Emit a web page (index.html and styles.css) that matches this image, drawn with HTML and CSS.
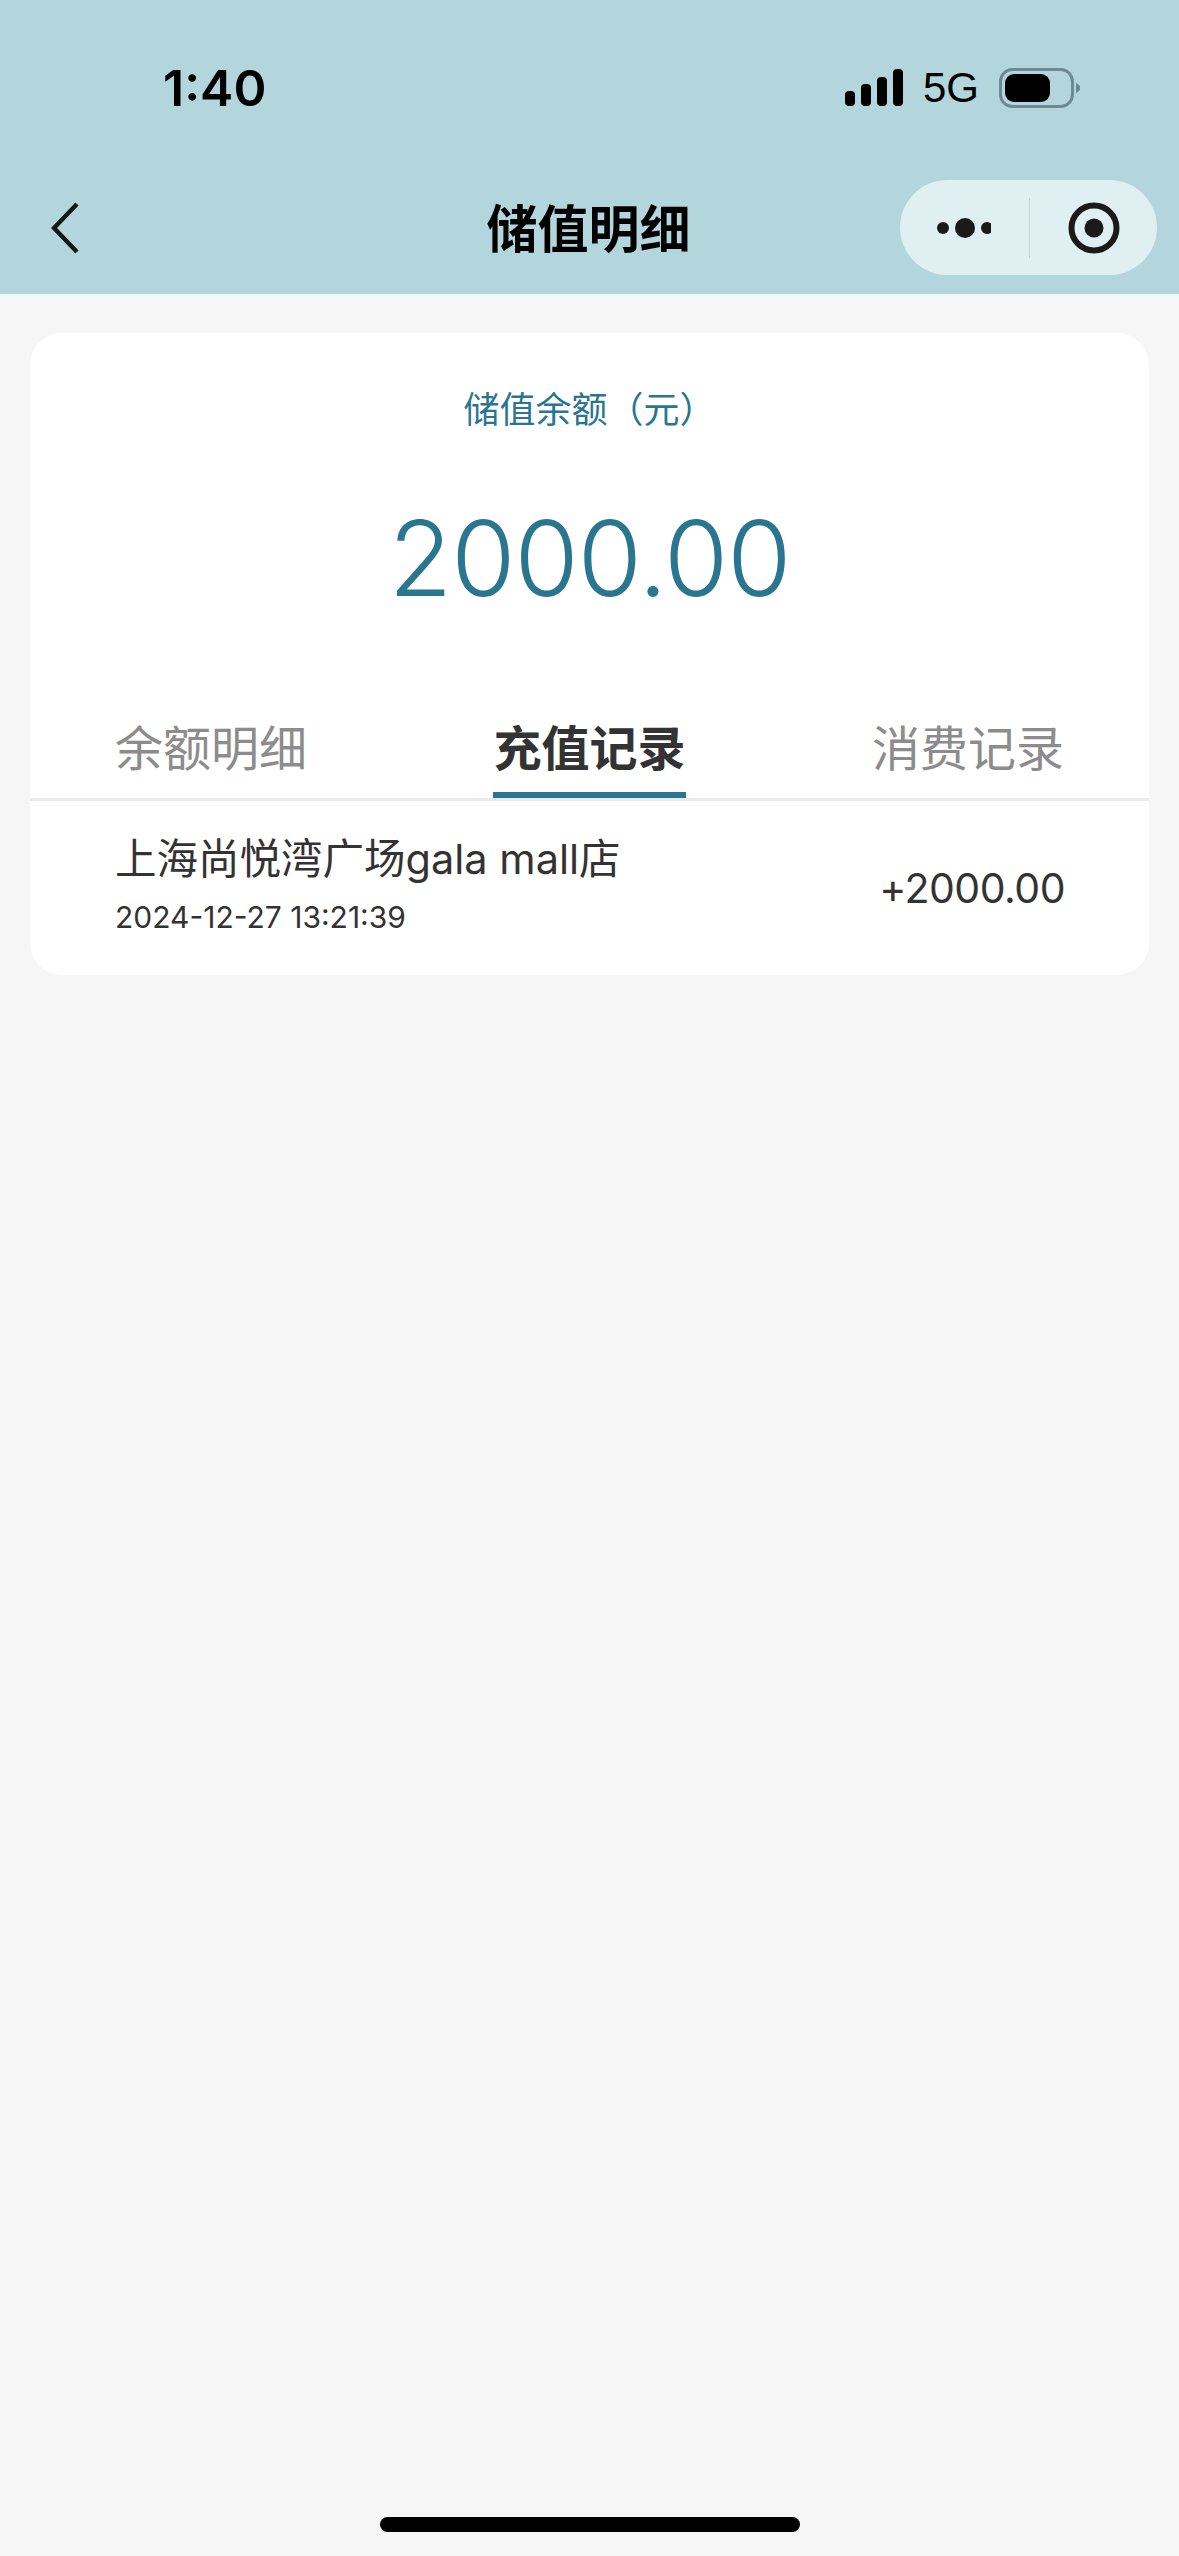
FILE: index.html
```html
<!DOCTYPE html>
<html lang="zh-CN">
<head>
<meta charset="utf-8">
<title>储值明细</title>
<link rel="stylesheet" href="styles.css">
</head>
<body>
<div class="page">
  <header class="header">
    <div class="status">
      <span class="time">1:40</span>
      <div class="status-right">
        <svg class="signal" width="58" height="37" viewBox="0 0 58 37"><rect x="0" y="22" width="10" height="15" rx="4"/><rect x="16" y="15" width="10" height="22" rx="4"/><rect x="32" y="8" width="10" height="29" rx="4"/><rect x="48" y="0" width="10" height="37" rx="4"/></svg>
        <span class="net">5G</span>
        <svg class="battery" width="82" height="40" viewBox="0 0 82 40"><rect x="1.5" y="1.5" width="72" height="37" rx="12" fill="none" stroke="#6d8a92" stroke-width="3"/><rect x="6" y="6" width="45" height="28" rx="9" fill="#000"/><path d="M77 14.5l4 3.5v4l-4 3.5z" fill="#6d8a92"/></svg>
      </div>
    </div>
    <nav class="nav">
      <svg class="back" width="28" height="52" viewBox="0 0 28 52"><path d="M26 2L3 26l23 24" fill="none" stroke="#14181a" stroke-width="4.5"/></svg>
      <h1 class="title">储值明细</h1>
      <div class="capsule">
        <svg class="more" width="54" height="22" viewBox="0 0 54 22"><circle cx="6" cy="11" r="6"/><circle cx="28" cy="11" r="10"/><circle cx="50" cy="11" r="6"/></svg>
        <span class="capsule-line"></span>
        <svg class="target" width="52" height="52" viewBox="0 0 52 52"><circle cx="26" cy="26" r="22.5" fill="none" stroke="#1a1a1a" stroke-width="6"/><circle cx="26" cy="26" r="9.5" fill="#1a1a1a"/></svg>
      </div>
    </nav>
  </header>

  <main class="card">
    <div class="balance">
      <div class="balance-label">储值余额（元）</div>
      <div class="balance-num">2000.00</div>
    </div>
    <div class="tabs">
      <span class="tab">余额明细</span>
      <span class="tab tab-active">充值记录</span>
      <span class="tab">消费记录</span>
    </div>
    <div class="record">
      <div class="record-info">
        <div class="record-name">上海尚悦湾广场gala mall店</div>
        <div class="record-time">2024-12-27 13:21:39</div>
      </div>
      <div class="record-amount">+2000.00</div>
    </div>
  </main>

  <div class="home-bar"></div>
</div>
</body>
</html>
```

FILE: styles.css
```css
* { box-sizing: border-box; margin: 0; padding: 0; }
html, body { width: 1179px; height: 2556px; overflow: hidden; }
body {
  background: #f6f6f6;
  font-family: Inter, "Noto Sans CJK SC", sans-serif;
}
.page { width: 1179px; height: 2556px; display: flex; flex-direction: column; }

.header { height: 294px; background: #b3d6dc; flex: none; }
.status {
  height: 176px;
  padding: 62px 98px 0 163px;
  display: flex;
  justify-content: space-between;
  align-items: flex-start;
}
.time { font-size: 50px; line-height: 52px; font-weight: 600; color: #000; }
.status-right { display: flex; align-items: flex-start; }
.signal { margin-top: 7px; }
.net { margin-left: 20px; margin-top: 2px; font-size: 42px; line-height: 48px; font-family: "Liberation Sans", sans-serif; color: #000; }
.battery { margin-left: 20px; margin-top: 6px; }

.nav { height: 118px; position: relative; display: flex; align-items: flex-start; justify-content: space-between; padding: 4px 22px 0 51px; }
.back { margin-top: 22px; }
.title {
  position: absolute;
  left: 0; right: 0; top: 0;
  text-align: center;
  font-size: 51px;
  line-height: 108px;
  font-weight: 700;
  color: #000;
  padding-right: 2px;
}
.capsule {
  width: 257px; height: 95px;
  background: #e0eff2;
  border-radius: 48px;
  display: flex;
  align-items: center;
  padding-left: 37px;
  position: relative;
}
.more { fill: #1a1a1a; flex: none; }
.capsule-line { width: 1px; height: 60px; background: #c3d4d8; margin-left: 38px; }
.target { margin-left: 38px; flex: none; }

.card {
  margin: 39px 30px 0;
  height: 642px;
  background: #fff;
  border-radius: 32px;
  display: flex;
  flex-direction: column;
}
.balance { height: 374px; text-align: center; color: #2a7590; padding-top: 53px; }
.balance-label { font-size: 36px; line-height: 48px; }
.balance-num { margin-top: 59px; font-size: 104px; line-height: 130px; font-weight: 330; letter-spacing: -1px; }

.tabs {
  height: 94px;
  padding: 0 85px;
  display: flex;
  justify-content: space-between;
  align-items: flex-start;
  border-bottom: 3px solid #ebebeb;
  flex: none;
}
.tab {
  height: 91px;
  font-size: 48px;
  line-height: 70px;
  color: #8c8c8c;
  padding-top: 7px;
}
.tab-active { color: #333; font-weight: 700; border-bottom: 6px solid #2a7590; }

.record {
  flex: 1;
  padding: 0 84px 0 85px;
  display: flex;
  align-items: center;
  justify-content: space-between;
}
.record-info { padding-bottom: 10px; }
.record-name { font-size: 41.5px; line-height: 60px; color: #333; }
.record-time { font-size: 30px; line-height: 40px; margin-top: 8px; color: #333; }
.record-amount { font-size: 41px; line-height: 60px; color: #333; letter-spacing: -0.5px; }

.home-bar {
  width: 420px; height: 15px;
  margin: auto auto 24px;
  background: #000;
  border-radius: 8px;
}
```
